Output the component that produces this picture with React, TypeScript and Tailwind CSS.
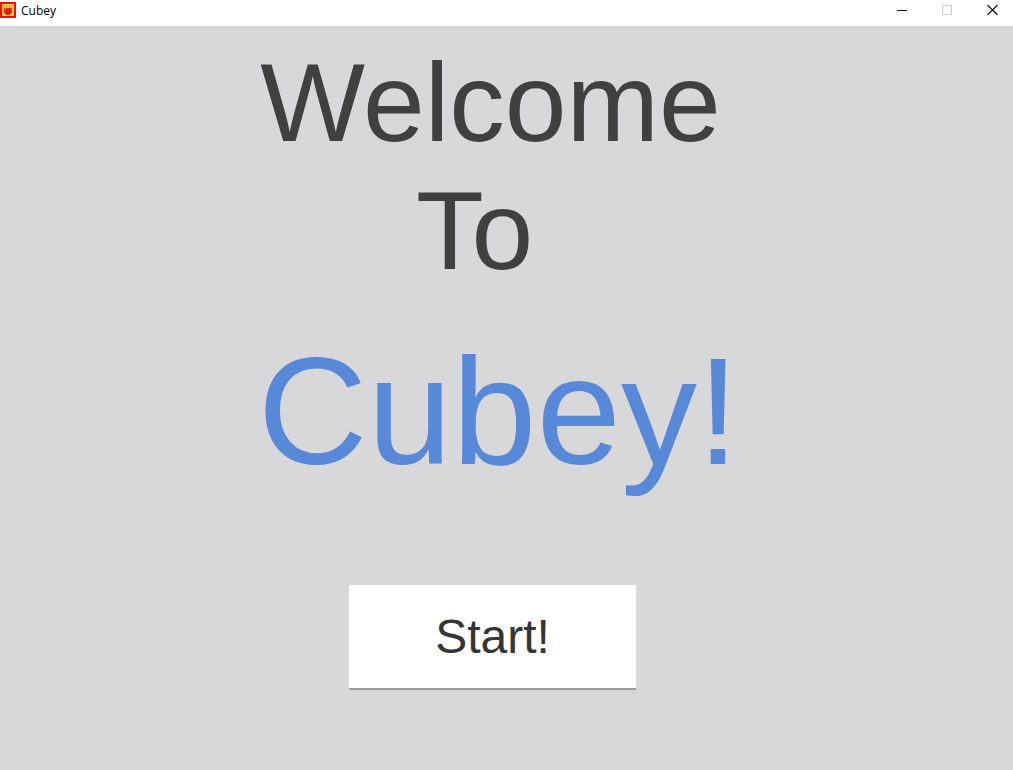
function AppIcon() {
  return (
    <svg width="16" height="16" viewBox="0 0 16 16" shapeRendering="crispEdges" aria-hidden="true">
      <rect width="16" height="16" fill="#fb0a05" />
      <rect x="2" y="2" width="12" height="12" fill="#fdd32a" />
      <rect x="3" y="3" width="10" height="2" fill="#e6b04a" />
      <rect x="3" y="5" width="10" height="1" fill="#f3bd38" />
      <path d="M4 6h8v5h-1v1h-1v1H6v-1H5v-1H4z" fill="#e8281c" />
      <rect x="6" y="7" width="4" height="5" fill="#d81c20" />
      <rect x="5" y="6" width="1" height="2" fill="#f07a2a" />
    </svg>
  );
}

function TitleBar() {
  return (
    <header className="flex h-[26px] items-start justify-between overflow-hidden bg-white">
      <div className="flex items-start gap-[5px] pt-[2px]">
        <AppIcon />
        <span className="font-['Open_Sans','Noto_Sans',sans-serif] text-[12px] leading-[18px] text-black">
          Cubey
        </span>
      </div>
      <div className="-mr-[2px] flex">
        <button type="button" aria-label="Minimize" className="flex h-5 w-[45px] items-center justify-center">
          <svg width="11" height="10" viewBox="0 0 11 10" shapeRendering="crispEdges">
            <rect y="5" width="10" height="1" fill="#000" />
          </svg>
        </button>
        <button type="button" aria-label="Maximize" disabled className="flex h-5 w-[45px] items-center justify-center">
          <svg width="11" height="10" viewBox="0 0 11 10" shapeRendering="crispEdges">
            <path d="M0 0h10v10H0zM1 1v8h8V1z" fill="#ccc" fillRule="evenodd" />
          </svg>
        </button>
        <button type="button" aria-label="Close" className="flex h-5 w-[45px] items-center justify-center">
          <svg width="11" height="10" viewBox="0 0 11 10">
            <path d="M.5 0l10 10M10.5 0l-10 10" stroke="#000" strokeWidth="1.1" />
          </svg>
        </button>
      </div>
    </header>
  );
}

export default function App() {
  return (
    <div className="flex min-h-screen flex-col bg-[#d8d8da] font-['Liberation_Sans',Arial,sans-serif]">
      <TitleBar />
      <main className="flex flex-1 flex-col items-center pt-[13px] pb-20">
        <h1 className="flex flex-col items-center text-[111px] leading-[128px] text-[#404040]">
          <span className="pr-8">Welcome</span>
          <span className="pr-16">To</span>
          <span className="mt-9 pr-4 text-[152px] leading-[160px] text-[#5789d8]">Cubey!</span>
        </h1>
        <div className="mt-[94px] pr-7">
          <button
            type="button"
            className="h-[105px] w-[287px] border-b-2 border-[#9b9d9c] bg-white text-[48px] leading-[56px] text-[#353535]"
          >
            Start!
          </button>
        </div>
      </main>
    </div>
  );
}
